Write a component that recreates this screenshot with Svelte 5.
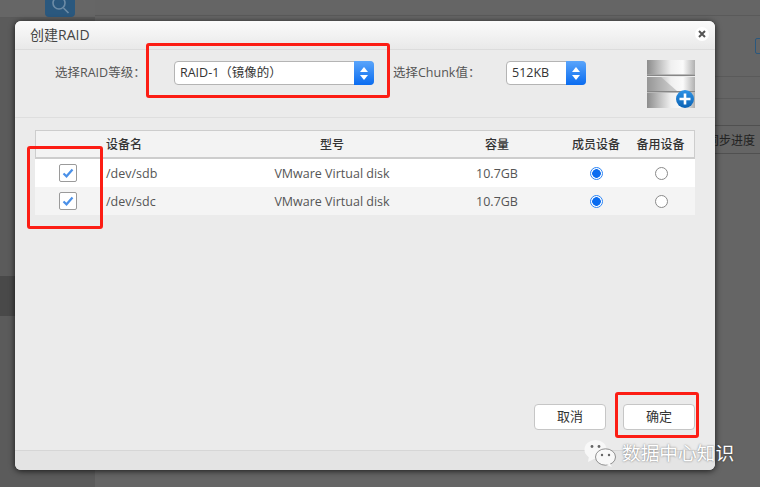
<script lang="ts">
  const disks = [
    { name: '/dev/sdb', model: 'VMware Virtual disk', size: '10.7GB' },
    { name: '/dev/sdc', model: 'VMware Virtual disk', size: '10.7GB' }
  ];
</script>

<div class="page">
  <aside class="side">
    <div class="side-top">
      <div class="search">
        <svg width="20" height="20" viewBox="0 0 20 20" fill="none" stroke="#6d8ca6" stroke-width="1.6">
          <circle cx="9" cy="3" r="6" />
          <path d="M13.5 8l5 5" />
        </svg>
      </div>
    </div>
    <div class="side-item"></div>
  </aside>
  <main class="main">
    <div class="line l1"></div>
    <div class="line l2"><span class="add"></span></div>
    <div class="line l3"></div>
    <div class="line l4"></div>
    <div class="line l5"><span>同步进度</span></div>
  </main>

  <section class="dialog">
    <header class="head">
      <span>创建RAID</span>
      <button type="button" class="close" aria-label="关闭">
        <svg width="8" height="8" viewBox="0 0 8 8" stroke="#555" stroke-width="2"><path d="M1 1l6 6M7 1L1 7" /></svg>
      </button>
    </header>

    <div class="form">
      <span class="lbl lbl-raid">选择RAID等级：</span>
      <div class="select raid">
        <span class="val">RAID-1（镜像的）</span>
        <span class="step"><i class="up"></i><i class="down"></i></span>
      </div>
      <span class="lbl lbl-chunk">选择Chunk值：</span>
      <div class="select chunk">
        <span class="val">512KB</span>
        <span class="step"><i class="up"></i><i class="down"></i></span>
      </div>
      <svg class="dbicon" width="48" height="48" viewBox="0 0 48 48">
        <defs>
          <linearGradient id="band" x1="0" x2="1" y1="0" y2="0">
            <stop offset="0" stop-color="#8c8c8c" />
            <stop offset="0.5" stop-color="#f0f0f0" />
            <stop offset="0.75" stop-color="#fafafa" />
            <stop offset="1" stop-color="#b0b0b0" />
          </linearGradient>
          <linearGradient id="plus" x1="0" x2="0" y1="0" y2="1">
            <stop offset="0" stop-color="#2f93e6" />
            <stop offset="1" stop-color="#0a62b4" />
          </linearGradient>
        </defs>
        <rect width="48" height="14.5" fill="url(#band)" />
        <rect y="14.5" width="48" height="1.5" fill="#868686" />
        <rect y="17" width="48" height="14" fill="url(#band)" />
        <path d="M0 17h14l16 14H0z" fill="#a0a0a0" opacity="0.5" />
        <rect y="31" width="48" height="1.5" fill="#868686" />
        <rect y="33" width="48" height="15" fill="url(#band)" />
        <circle cx="38" cy="39" r="9" fill="url(#plus)" />
        <path d="M38 33.5v11M32.5 39h11" stroke="#fff" stroke-width="2.6" />
      </svg>
    </div>

    <div class="body">
      <table>
        <colgroup>
          <col style="width:66px" />
          <col style="width:134px" />
          <col style="width:194px" />
          <col style="width:136px" />
          <col style="width:62px" />
          <col style="width:68px" />
        </colgroup>
        <thead>
          <tr>
            <th></th>
            <th class="left">设备名</th>
            <th>型号</th>
            <th>容量</th>
            <th>成员设备</th>
            <th>备用设备</th>
          </tr>
        </thead>
        <tbody>
          {#each disks as d}
            <tr>
              <td>
                <span class="check">
                  <svg width="12" height="10" viewBox="0 0 12 10" fill="none" stroke="#4a90e8" stroke-width="2.2"><path d="M1.5 5.5l3 2.8L10.5 1.5" /></svg>
                </span>
              </td>
              <td class="left">{d.name}</td>
              <td>{d.model}</td>
              <td>{d.size}</td>
              <td><span class="radio on"></span></td>
              <td><span class="radio"></span></td>
            </tr>
          {/each}
        </tbody>
      </table>

      <div class="actions">
        <button type="button" class="btn">取消</button>
        <button type="button" class="btn">确定</button>
      </div>
    </div>

    <footer class="foot"></footer>
  </section>

  <div class="mark m1"></div>
  <div class="mark m2"></div>
  <div class="mark m3"></div>

  <div class="wm">
    <svg width="32" height="28" viewBox="0 0 32 28">
      <ellipse cx="11.5" cy="10.5" rx="11" ry="9.5" fill="#f8f8f8" />
      <path d="M5 17l-1 6 7-3.5z" fill="#f8f8f8" />
      <ellipse cx="21.5" cy="18" rx="10" ry="8.2" fill="#f8f8f8" stroke="#777" stroke-width="0.8" />
      <path d="M26 24.5l2 3.5-6-2z" fill="#f8f8f8" />
      <circle cx="8" cy="7.5" r="1.4" fill="#666" />
      <circle cx="15" cy="7.5" r="1.4" fill="#666" />
      <circle cx="18" cy="16" r="1.2" fill="#666" />
      <circle cx="25" cy="16" r="1.2" fill="#666" />
    </svg>
    <span>数据中心知识</span>
  </div>
</div>

<style>
  :global(body) {
    margin: 0;
    background: #656565;
  }

  .page {
    position: relative;
    display: flex;
    width: 760px;
    height: 487px;
    overflow: hidden;
    background: #656565;
    font-family: "Open Sans", "Noto Sans CJK SC", sans-serif;
    font-size: 12.5px;
    color: #444;
  }

  .side {
    width: 95px;
    flex: none;
    background: #5b5b5b;
  }

  .side-top {
    height: 17px;
    padding-left: 45px;
    background: #666;
    border-bottom: 1px solid #5a5a5a;
  }

  .search {
    width: 30px;
    height: 17px;
    display: flex;
    justify-content: center;
    background: #2a587e;
    border-radius: 0 0 4px 4px;
    overflow: hidden;
  }

  .side-item {
    height: 40px;
    margin-top: 258px;
    background: #494949;
  }

  .main {
    flex: 1;
  }

  .line {
    border-bottom: 1px solid #5a5a5a;
    position: relative;
  }

  .l1 { height: 15px; }
  .l2 { height: 60px; }
  .l3 { height: 21px; }
  .l4 { height: 26px; border-bottom-color: #505050; }
  .l5 {
    height: 27px;
    display: flex;
    align-items: center;
    justify-content: flex-end;
    padding-right: 5px;
    border-bottom-color: #505050;
    font-size: 12px;
    color: #222;
  }

  .add {
    position: absolute;
    right: -7px;
    top: 22px;
    width: 10px;
    height: 14px;
    border: 1px solid #2a587e;
    border-radius: 2px;
  }

  .dialog {
    position: absolute;
    left: 15px;
    top: 21px;
    width: 700px;
    height: 449px;
    display: flex;
    flex-direction: column;
    background: #ebebeb;
    border-radius: 6px;
    box-shadow: 0 1px 6px rgba(0, 0, 0, 0.75);
  }

  .head {
    height: 29px;
    flex: none;
    display: flex;
    align-items: center;
    justify-content: space-between;
    padding: 0 6px 2px 15px;
    box-sizing: border-box;
    background: linear-gradient(#fbfbfb, #e9e9e9);
    border-bottom: 1px solid #dcdcdc;
    border-radius: 6px 6px 0 0;
    font-size: 14px;
    color: #444;
  }

  .close {
    width: 14px;
    height: 14px;
    padding: 0;
    display: flex;
    align-items: center;
    justify-content: center;
    background: #fff;
    border: none;
    border-radius: 50%;
  }

  .form {
    position: relative;
    height: 68px;
    flex: none;
    display: flex;
    align-items: flex-start;
    padding-top: 11px;
    box-sizing: border-box;
    border-bottom: 1px solid #dedede;
  }

  .lbl {
    line-height: 24px;
    color: #555;
    white-space: nowrap;
  }

  .lbl-raid {
    width: 104px;
    margin-left: 40px;
    margin-right: 15px;
  }

  .lbl-chunk {
    width: 98px;
    margin-left: 19px;
    margin-right: 15px;
  }

  .select {
    height: 24px;
    display: flex;
    box-sizing: border-box;
    background: #fff;
    border: 1px solid #b4b4b4;
    border-radius: 4px;
    color: #333;
  }

  .raid { width: 200px; }
  .chunk { width: 80px; }

  .val {
    flex: 1;
    padding-left: 5px;
    line-height: 22px;
    white-space: nowrap;
  }

  .step {
    width: 20px;
    margin: -1px;
    display: flex;
    flex-direction: column;
    align-items: center;
    justify-content: center;
    gap: 3px;
    background: linear-gradient(#5aa5fb, #0a6cf0);
    border-radius: 0 4px 4px 0;
  }

  .up, .down {
    width: 0;
    height: 0;
    border-left: 4px solid transparent;
    border-right: 4px solid transparent;
  }

  .up { border-bottom: 5px solid #fff; }
  .down { border-top: 5px solid #fff; }

  .dbicon {
    position: absolute;
    left: 632px;
    top: 10px;
  }

  .body {
    flex: 1;
    position: relative;
    padding: 12px 20px 0;
  }

  table {
    width: 660px;
    table-layout: fixed;
    border-collapse: separate;
    border-spacing: 0;
    color: #555;
  }

  th {
    height: 26px;
    padding: 0;
    background: #f3f3f3;
    border-top: 1px solid #cdcdcd;
    border-bottom: 2px solid #cdcdcd;
    font-size: 12px;
    font-weight: 500;
    color: #333;
    text-align: center;
  }

  th:last-child { border-right: 1px solid #cdcdcd; }
  th:first-child { border-left: 1px solid #cdcdcd; }

  td {
    height: 28px;
    padding: 0;
    background: #fff;
    text-align: center;
    white-space: nowrap;
  }

  tbody tr:nth-child(even) td { background: #f4f4f4; }

  .left {
    padding-left: 5px;
    text-align: left;
  }

  .check {
    display: inline-flex;
    align-items: center;
    justify-content: center;
    width: 18px;
    height: 18px;
    box-sizing: border-box;
    vertical-align: middle;
    background: #fff;
    border: 1px solid #9a9a9a;
    border-radius: 2px;
  }

  .radio {
    display: inline-block;
    width: 13px;
    height: 13px;
    margin-bottom: 2px;
    vertical-align: middle;
    box-sizing: border-box;
    background: #fff;
    border: 1px solid #8a8a8a;
    border-radius: 50%;
  }

  .radio.on {
    border-color: #2b84f5;
    background: radial-gradient(circle, #0a6cf0 0 4px, #fff 4.6px);
  }

  .actions {
    position: absolute;
    right: 20px;
    bottom: 20px;
    display: flex;
    gap: 17px;
  }

  .btn {
    width: 72px;
    height: 26px;
    padding: 0 0 3px;
    background: #fff;
    border: 1px solid #c6c6c6;
    border-radius: 4px;
    font-family: inherit;
    font-size: 13px;
    color: #333;
  }

  .foot {
    height: 20px;
    flex: none;
    box-sizing: border-box;
    background: #e4e4e4;
    border-top: 1px solid #d6d6d6;
    border-radius: 0 0 6px 6px;
  }

  .mark {
    position: absolute;
    box-sizing: border-box;
    border: 3px solid #fc1d14;
    border-radius: 3px;
  }

  .m1 { left: 146px; top: 43px; width: 244px; height: 55px; }
  .m2 { left: 27px; top: 146px; width: 76px; height: 83px; }
  .m3 { left: 615px; top: 392px; width: 84px; height: 46px; }

  .wm {
    position: absolute;
    left: 584px;
    top: 439px;
    display: flex;
    align-items: center;
    gap: 6px;
    font-size: 18.7px;
    line-height: 28px;
    color: #fff;
    text-shadow: 0 0 2px rgba(0, 0, 0, 0.55);
    white-space: nowrap;
  }
</style>
